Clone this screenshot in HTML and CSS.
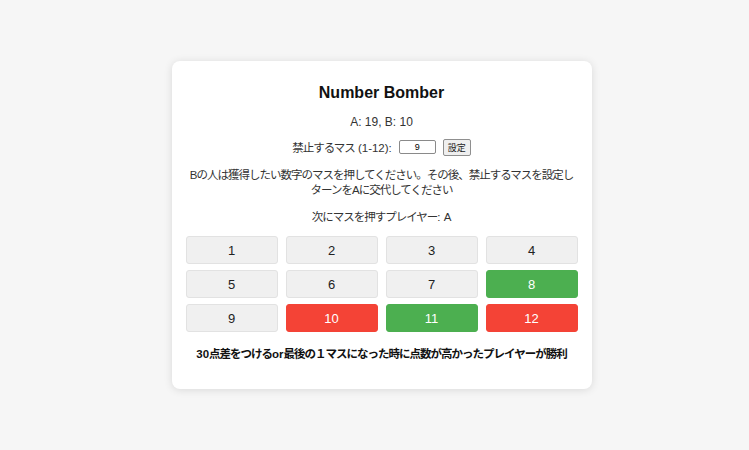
FILE: index.html
```html
<!DOCTYPE html>
<html lang="ja">
<head>
    <meta charset="UTF-8">
    <meta name="viewport" content="width=device-width, initial-scale=1.0">
    <title>Number Bomber</title>
    <link rel="stylesheet" href="styles.css">
</head>
<body>
    <div class="page">
        <div class="game">
            <h1 class="title">Number Bomber</h1>
            <div class="score">A: 19, B: 10</div>
            <div class="ban-row">
                <label for="ban-input">禁止するマス<span class="range"> (1-12):</span></label>
                <input id="ban-input" class="ban-input" type="number" value="9">
                <button class="ban-button">設定</button>
            </div>
            <p class="message">Bの人は獲得したい数字のマスを押してください。その後、禁止するマスを設定しターンをAに交代してください</p>
            <div class="next">次にマスを押すプレイヤー<span class="range">: A</span></div>
            <div class="board">
                <button class="cell">1</button>
                <button class="cell">2</button>
                <button class="cell">3</button>
                <button class="cell">4</button>
                <button class="cell">5</button>
                <button class="cell">6</button>
                <button class="cell">7</button>
                <button class="cell cell-a">8</button>
                <button class="cell">9</button>
                <button class="cell cell-b">10</button>
                <button class="cell cell-a">11</button>
                <button class="cell cell-b">12</button>
            </div>
            <p class="rule"><span class="range">30</span>点差をつける<span class="range">or</span>最後の１マスになった時に点数が高かったプレイヤーが勝利</p>
        </div>
    </div>
</body>
</html>
```

FILE: styles.css
```css
body, html {
    margin: 0;
    padding: 0;
    height: 100%;
    font-family: "Liberation Sans", "Noto Sans CJK JP", sans-serif;
    background-color: #f6f6f6;
    color: #333;
}

.page {
    height: 100vh;
    display: flex;
    align-items: center;
    justify-content: center;
    padding-left: 14px;
    box-sizing: border-box;
}

.game {
    width: 392px;
    padding: 22px 14px 27px;
    background-color: #fff;
    border-radius: 8px;
    box-shadow: 0 1px 8px rgba(0, 0, 0, 0.12);
    text-align: center;
}

.title {
    margin: 0;
    font-size: 16px;
    line-height: 20px;
    font-weight: 700;
    color: #111;
}

.score {
    margin-top: 11px;
    font-size: 12px;
    line-height: 16px;
}

.ban-row {
    margin-top: 9px;
    display: flex;
    align-items: center;
    justify-content: center;
    height: 17px;
    font-size: 11.5px;
    letter-spacing: -1px;
}

/* 英数字部分は詰めない */
.range {
    letter-spacing: 0;
}

.ban-input {
    width: 37px;
    height: 14px;
    margin: 0 0 0 7px;
    padding: 0;
    box-sizing: border-box;
    border: 1px solid #8a8a8a;
    border-radius: 2px;
    font-family: inherit;
    font-size: 9px;
    text-align: center;
    letter-spacing: 0;
    -moz-appearance: textfield;
}

.ban-input::-webkit-inner-spin-button,
.ban-input::-webkit-outer-spin-button {
    -webkit-appearance: none;
    margin: 0;
}

.ban-button {
    height: 17px;
    margin-left: 7px;
    padding: 0 4px;
    border: 1px solid #8f8f8f;
    border-radius: 2px;
    background-color: #efefef;
    font-family: inherit;
    font-size: 9px;
    letter-spacing: 0;
    color: #222;
}

.message {
    margin: 12px 0 0;
    font-size: 11.5px;
    line-height: 15px;
    letter-spacing: -1px;
}

.next {
    margin-top: 11.5px;
    font-size: 11.5px;
    line-height: 16px;
    letter-spacing: -1px;
}

.board {
    margin-top: 11px;
    display: grid;
    grid-template-columns: repeat(4, 1fr);
    column-gap: 8px;
    row-gap: 6px;
}

.cell {
    height: 28px;
    padding: 0;
    border: 1px solid #e2e2e2;
    border-radius: 3px;
    background-color: #f0f0f0;
    font-family: inherit;
    font-size: 13px;
    color: #222;
}

.cell-a {
    background-color: #4caf50;
    border-color: #4caf50;
    color: #fff;
}

.cell-b {
    background-color: #f44336;
    border-color: #f44336;
    color: #fff;
}

.rule {
    margin: 14px 0 0;
    font-size: 11.5px;
    line-height: 16px;
    font-weight: 700;
    letter-spacing: -1px;
    color: #111;
}
```
